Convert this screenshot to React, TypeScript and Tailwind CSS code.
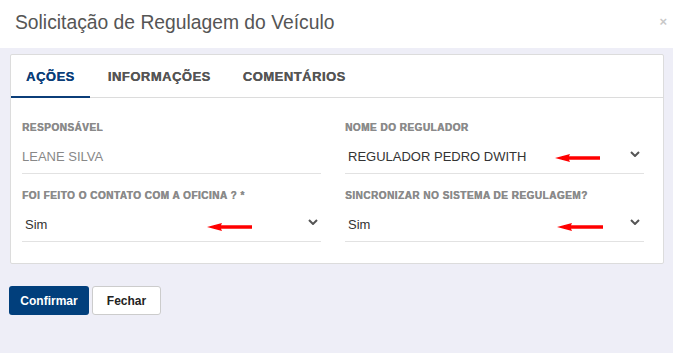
import React from "react";

const Chevron = () => (
  <svg width="10" height="6" viewBox="0 0 10 6" className="shrink-0">
    <polyline points="1,1 5,5 9,1" fill="none" stroke="#555" strokeWidth="2" />
  </svg>
);

const Arrow = ({ left, top, width = 46 }: { left: number; top: number; width?: number }) => (
  <svg
    width={width}
    height="10"
    viewBox={`0 0 ${width} 10`}
    className="absolute"
    style={{ left, top }}
  >
    <polygon points={`0,5 15,1 14,3.3 ${width},3.3 ${width},6.7 14,6.7 15,9`} fill="#ff0000" />
  </svg>
);

const Label = ({ children }: { children: React.ReactNode }) => (
  <div className="text-[10px] leading-[12px] font-bold tracking-[0.5px] text-[#8a8a8a] uppercase [text-shadow:0.4px_0_0_#8a8a8a]">
    {children}
  </div>
);

export default function App() {
  return (
    <div
      className="w-[673px] h-[353px] bg-[#eeeef7] overflow-hidden"
      style={{ fontFamily: '"Liberation Sans", Arial, sans-serif' }}
    >
      {/* Header */}
      <div className="h-[48px] bg-white flex items-center justify-between pl-[15px] pr-[6px]">
        <div className="text-[19.3px] text-[#555] leading-none -mt-[3px]">
          Solicitação de Regulagem do Veículo
        </div>
        <div className="text-[13px] font-bold text-[#c8c8c8] leading-none -mt-[5px]">×</div>
      </div>

      {/* Card */}
      <div className="mt-[6px] ml-[10px] w-[654px] bg-white border border-[#dcdcdc] rounded-[2px]">
        <div className="flex h-[43px] border-b border-[#dcdcdc] text-[13px] font-bold tracking-[0.5px]">
          <div className="px-[15px] flex items-center text-[#0b3e79] border-b-2 border-[#0b3e79] -mb-px pt-[2px] [text-shadow:0.3px_0_0_#0b3e79]">
            AÇÕES
          </div>
          <div className="ml-[2px] px-4 flex items-center text-[#555] pt-[2px] [text-shadow:0.3px_0_0_#555]">INFORMAÇÕES</div>
          <div className="px-4 flex items-center text-[#555] pt-[2px] [text-shadow:0.3px_0_0_#555]">COMENTÁRIOS</div>
        </div>

        <div className="pl-[11px] pr-[19px] pt-[24px] pb-[21px] grid grid-cols-2 gap-x-[24px]">
          {/* Row 1 */}
          <div>
            <Label>Responsável</Label>
            <div className="mt-[6px] h-[34px] border-b border-[#e2e2e2] flex items-center text-[13px] text-[#888]">
              LEANE SILVA
            </div>
          </div>
          <div>
            <Label>Nome do regulador</Label>
            <div className="relative mt-[6px] h-[34px] border-b border-[#e2e2e2] flex items-center justify-between pl-[3px] pr-[4px] text-[13px] text-[#333]">
              <span>REGULADOR PEDRO DWITH</span>
              <span className="-mt-[6px]"><Chevron /></span>
              <Arrow left={210} top={13} width={45} />
            </div>
          </div>

          {/* Row 2 */}
          <div className="mt-[16px]">
            <Label>Foi feito o contato com a oficina ? *</Label>
            <div className="relative mt-[6px] h-[34px] border-b border-[#e2e2e2] flex items-center justify-between pl-[3px] pr-[3px] text-[13px] text-[#333]">
              <span>Sim</span>
              <span className="-mt-[6px]"><Chevron /></span>
              <Arrow left={185} top={14} width={45} />
            </div>
          </div>
          <div className="mt-[16px]">
            <Label>Sincronizar no sistema de regulagem?</Label>
            <div className="relative mt-[6px] h-[34px] border-b border-[#e2e2e2] flex items-center justify-between pl-[3px] pr-[4px] text-[13px] text-[#333]">
              <span>Sim</span>
              <span className="-mt-[6px]"><Chevron /></span>
              <Arrow left={212} top={14} width={46} />
            </div>
          </div>
        </div>
      </div>

      {/* Buttons */}
      <div className="mt-[22px] ml-[9px] flex gap-[3px]">
        <button className="h-[29px] w-[80px] bg-[#013f7c] text-white text-[12px] font-bold rounded-[3px]">
          Confirmar
        </button>
        <button className="h-[29px] w-[69px] bg-white border border-[#cccccc] text-[#222] text-[12px] font-bold rounded-[3px]">
          Fechar
        </button>
      </div>
    </div>
  );
}
